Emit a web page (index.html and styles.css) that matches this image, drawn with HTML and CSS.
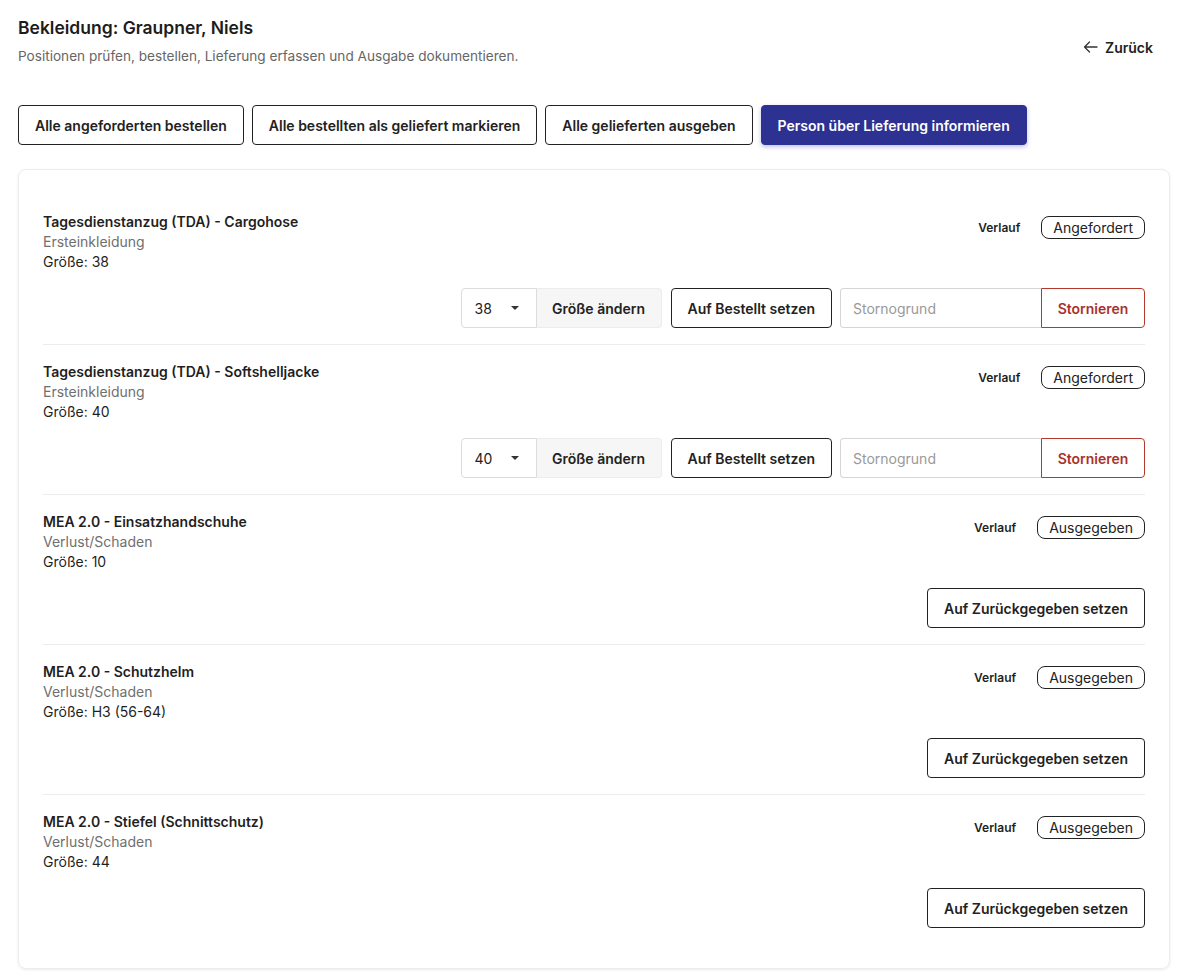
FILE: index.html
```html
<!DOCTYPE html>
<html lang="de">
<head>
  <meta charset="UTF-8">
  <meta name="viewport" content="width=device-width, initial-scale=1.0">
  <title>Bekleidung: Graupner, Niels</title>
  <link rel="stylesheet" href="styles.css">
</head>
<body>
  <div class="page">
    <div class="header">
      <div>
        <h1>Bekleidung: Graupner, Niels</h1>
        <p class="subtitle">Positionen prüfen, bestellen, Lieferung erfassen und Ausgabe dokumentieren.</p>
      </div>
      <button class="back-btn">
        <svg width="15" height="12" viewBox="0 0 15 12" fill="none" stroke="#333" stroke-width="1.3" stroke-linecap="round" stroke-linejoin="round">
          <path d="M14 6H1.5M6.5 1L1.5 6l5 5"/>
        </svg>
        Zurück
      </button>
    </div>

    <div class="bulk-actions">
      <button class="btn">Alle angeforderten bestellen</button>
      <button class="btn">Alle bestellten als geliefert markieren</button>
      <button class="btn">Alle gelieferten ausgeben</button>
      <button class="btn btn-primary">Person über Lieferung informieren</button>
    </div>

    <div class="card">
      <div class="item">
        <div class="item-head">
          <div class="item-info">
            <div class="item-title">Tagesdienstanzug (TDA) - Cargohose</div>
            <div class="item-reason">Ersteinkleidung</div>
            <div class="item-size">Größe: 38</div>
          </div>
          <div class="item-status">
            <span class="history">Verlauf</span>
            <span class="badge">Angefordert</span>
          </div>
        </div>
        <div class="item-actions">
          <div class="size-group">
            <div class="size-select">38<span class="caret"></span></div>
            <button class="size-btn">Größe ändern</button>
          </div>
          <button class="btn">Auf Bestellt setzen</button>
          <div class="cancel-group">
            <input class="cancel-input" type="text" placeholder="Stornogrund">
            <button class="cancel-btn">Stornieren</button>
          </div>
        </div>
      </div>

      <div class="item">
        <div class="item-head">
          <div class="item-info">
            <div class="item-title">Tagesdienstanzug (TDA) - Softshelljacke</div>
            <div class="item-reason">Ersteinkleidung</div>
            <div class="item-size">Größe: 40</div>
          </div>
          <div class="item-status">
            <span class="history">Verlauf</span>
            <span class="badge">Angefordert</span>
          </div>
        </div>
        <div class="item-actions">
          <div class="size-group">
            <div class="size-select">40<span class="caret"></span></div>
            <button class="size-btn">Größe ändern</button>
          </div>
          <button class="btn">Auf Bestellt setzen</button>
          <div class="cancel-group">
            <input class="cancel-input" type="text" placeholder="Stornogrund">
            <button class="cancel-btn">Stornieren</button>
          </div>
        </div>
      </div>

      <div class="item">
        <div class="item-head">
          <div class="item-info">
            <div class="item-title">MEA 2.0 - Einsatzhandschuhe</div>
            <div class="item-reason">Verlust/Schaden</div>
            <div class="item-size">Größe: 10</div>
          </div>
          <div class="item-status">
            <span class="history">Verlauf</span>
            <span class="badge">Ausgegeben</span>
          </div>
        </div>
        <div class="item-actions">
          <button class="btn">Auf Zurückgegeben setzen</button>
        </div>
      </div>

      <div class="item">
        <div class="item-head">
          <div class="item-info">
            <div class="item-title">MEA 2.0 - Schutzhelm</div>
            <div class="item-reason">Verlust/Schaden</div>
            <div class="item-size">Größe: H3 (56-64)</div>
          </div>
          <div class="item-status">
            <span class="history">Verlauf</span>
            <span class="badge">Ausgegeben</span>
          </div>
        </div>
        <div class="item-actions">
          <button class="btn">Auf Zurückgegeben setzen</button>
        </div>
      </div>

      <div class="item">
        <div class="item-head">
          <div class="item-info">
            <div class="item-title">MEA 2.0 - Stiefel (Schnittschutz)</div>
            <div class="item-reason">Verlust/Schaden</div>
            <div class="item-size">Größe: 44</div>
          </div>
          <div class="item-status">
            <span class="history">Verlauf</span>
            <span class="badge">Ausgegeben</span>
          </div>
        </div>
        <div class="item-actions">
          <button class="btn">Auf Zurückgegeben setzen</button>
        </div>
      </div>
    </div>
  </div>
</body>
</html>
```

FILE: styles.css
```css
body {
  margin: 0;
  font-family: Inter, 'Noto Sans', sans-serif;
  background-color: #fff;
  color: #222;
}
button, input {
  font-family: inherit;
}
.page {
  padding: 16px 27px 8px 18px;
}
.header {
  display: flex;
  justify-content: space-between;
  align-items: flex-start;
}
h1 {
  margin: 0;
  font-size: 17.5px;
  line-height: 24px;
  font-weight: 600;
  color: #1c1c1c;
}
.subtitle {
  margin: 6px 0 0;
  font-size: 13.6px;
  line-height: 20px;
  color: #666;
}
.back-btn {
  display: flex;
  align-items: center;
  gap: 7px;
  height: 36px;
  margin-top: 13px;
  margin-right: 1px;
  padding: 0 16px;
  border: none;
  background: none;
  font-size: 14px;
  font-weight: 600;
  color: #222;
  cursor: pointer;
}
.bulk-actions {
  display: flex;
  gap: 8px;
  margin-top: 39px;
}
.btn {
  height: 40px;
  padding: 0 16px;
  border: 1px solid #222;
  border-radius: 4px;
  background-color: #fff;
  color: #222;
  font-size: 14px;
  font-weight: 600;
  cursor: pointer;
  white-space: nowrap;
}
.btn-primary {
  background-color: #2c3192;
  border-color: #2c3192;
  color: #fff;
  box-shadow: 0 2px 4px rgba(44, 49, 146, 0.3);
}
.card {
  margin-top: 24px;
  padding: 25px 24px 24px 24px;
  border: 1px solid #ececec;
  border-radius: 8px;
  box-shadow: 0 1px 3px rgba(0, 0, 0, 0.08);
}
.item {
  padding: 17px 0 16px;
  border-top: 1px solid #ececec;
}
.item:first-child {
  border-top: none;
}
.item-head {
  display: flex;
  justify-content: space-between;
  align-items: flex-start;
}
.item-info {
  font-size: 14px;
  line-height: 20px;
}
.item-title {
  font-weight: 600;
  color: #1f1f1f;
}
.item-reason {
  color: #6f6f6f;
}
.item-size {
  color: #1f1f1f;
}
.item-status {
  display: flex;
  align-items: center;
  gap: 21px;
  margin-top: 4px;
}
.history {
  font-size: 12px;
  font-weight: 600;
  color: #1f1f1f;
}
.badge {
  display: inline-block;
  padding: 2px 11px;
  border: 1px solid #222;
  border-radius: 8px;
  font-size: 14px;
  line-height: 17px;
  color: #222;
}
.item-actions {
  display: flex;
  justify-content: flex-end;
  gap: 8px;
  margin-top: 16px;
}
.size-group {
  display: flex;
  margin-right: 1px;
}
.size-select {
  display: flex;
  align-items: center;
  justify-content: space-between;
  box-sizing: border-box;
  width: 76px;
  height: 40px;
  padding: 0 17px 0 13px;
  border: 1px solid #dcdcdc;
  border-radius: 4px 0 0 4px;
  font-size: 14px;
  color: #222;
}
.caret {
  width: 0;
  height: 0;
  border-left: 4px solid transparent;
  border-right: 4px solid transparent;
  border-top: 4px solid #333;
}
.size-btn {
  width: 125px;
  height: 40px;
  border: 1px solid #ececec;
  border-left: none;
  border-radius: 0 4px 4px 0;
  background-color: #f6f6f6;
  color: #222;
  font-size: 14px;
  font-weight: 600;
  cursor: pointer;
}
.cancel-group {
  display: flex;
}
.cancel-input {
  box-sizing: border-box;
  width: 201px;
  height: 40px;
  padding: 0 12px;
  border: 1px solid #d6d6d6;
  border-right: none;
  border-radius: 4px 0 0 4px;
  font-size: 14px;
  color: #222;
  outline: none;
}
.cancel-input::placeholder {
  color: #999;
}
.cancel-btn {
  width: 104px;
  height: 40px;
  border: 1px solid #b3392d;
  border-radius: 0 4px 4px 0;
  background-color: #fff;
  color: #a8322a;
  font-size: 14px;
  font-weight: 600;
  cursor: pointer;
}
```
